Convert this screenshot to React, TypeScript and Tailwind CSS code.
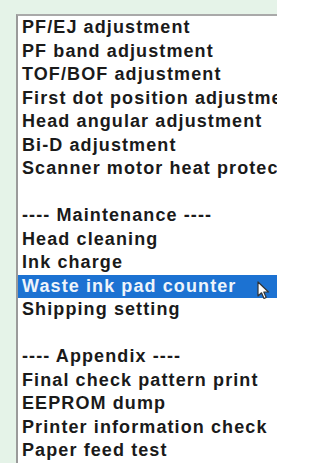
const rows: (string | null)[] = [
  "PF/EJ adjustment",
  "PF band adjustment",
  "TOF/BOF adjustment",
  "First dot position adjustment",
  "Head angular adjustment",
  "Bi-D adjustment",
  "Scanner motor heat protection",
  null,
  "---- Maintenance ----",
  "Head cleaning",
  "Ink charge",
  "Waste ink pad counter",
  "Shipping setting",
  null,
  "---- Appendix ----",
  "Final check pattern print",
  "EEPROM dump",
  "Printer information check",
  "Paper feed test",
];

const selected = "Waste ink pad counter";

const Cursor = () => (
  <svg width="13" height="19" viewBox="0 0 13 19" className="absolute left-[239px] top-[6px]">
    <path d="M1 1 L1 15 L4.5 11.8 L7 17.5 L9.2 16.5 L6.8 11 L11.5 11 Z" fill="#ffffff" stroke="#333" strokeWidth="1.2" strokeLinejoin="round" />
  </svg>
);

export default function App() {
  return (
    <div className="w-[320px] h-[475px] bg-white overflow-hidden">
      <div className="w-[277px] h-[463px] bg-[#e5f3e8] pl-4 pt-[14px] flex">
        <div
          className="flex-1 bg-white border-l-2 border-t-2 border-l-[#9a9a9a] border-t-[#a9a9a9] overflow-hidden"
          style={{ fontFamily: '"Liberation Sans", Arial, sans-serif' }}
        >
          {rows.map((r, i) =>
            r === null ? (
              <div key={i} className="h-[23.5px]" />
            ) : r === selected ? (
              <div
                key={i}
                className="relative h-[23.5px] leading-[23.5px] bg-[#1c72d2] text-[#eef4fb] font-bold text-[18px] tracking-[1.1px] pl-[4px] whitespace-nowrap"
              >
                {r}
                <Cursor />
              </div>
            ) : (
              <div
                key={i}
                className="h-[23.5px] leading-[23.5px] text-[#1a1a1a] font-bold text-[18px] tracking-[1.1px] pl-[4px] whitespace-nowrap"
              >
                {r}
              </div>
            )
          )}
        </div>
      </div>
    </div>
  );
}
